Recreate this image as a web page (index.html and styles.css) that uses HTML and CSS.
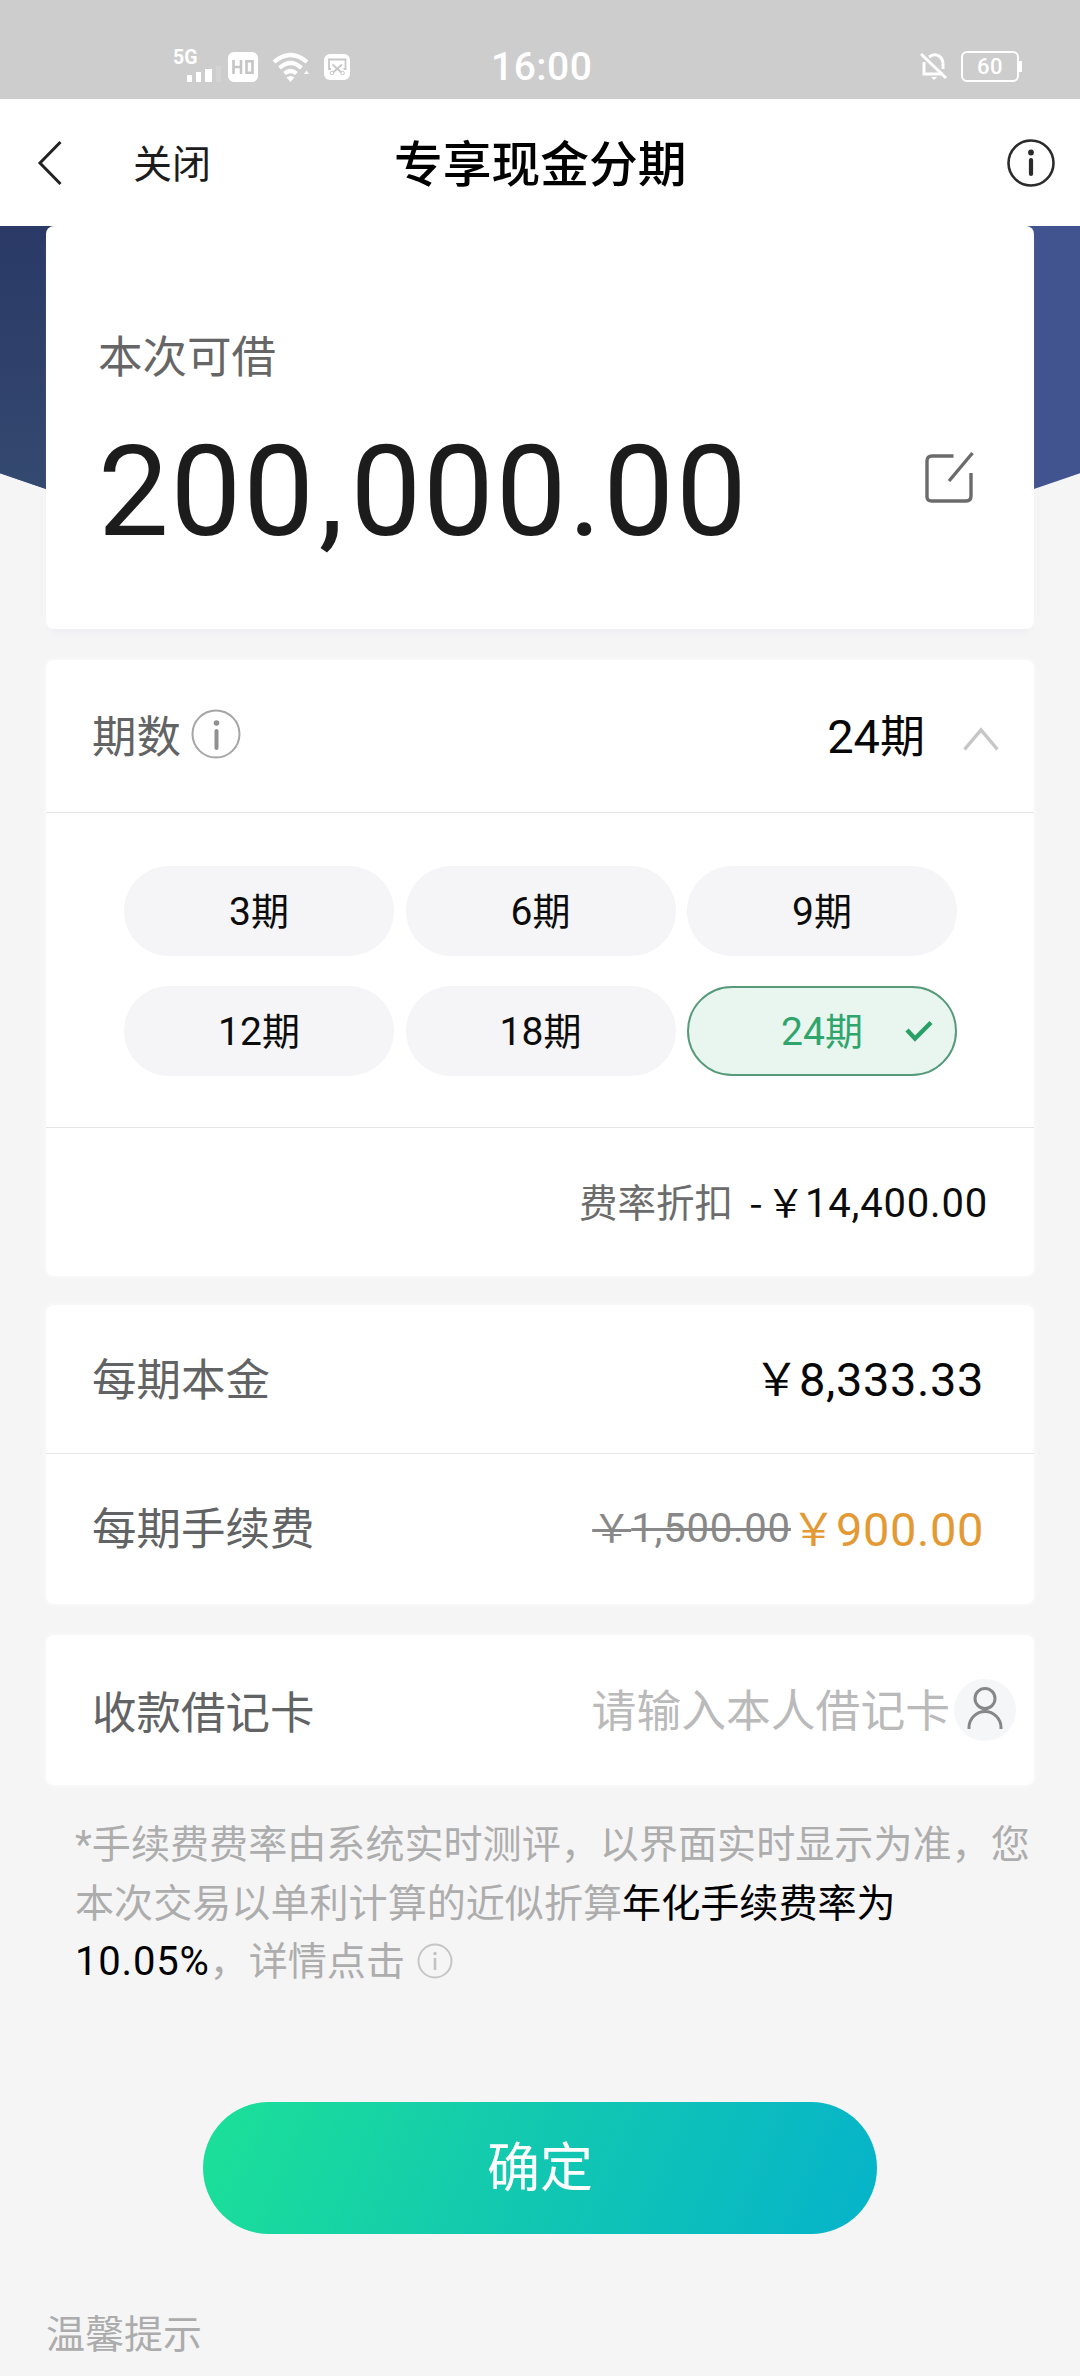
FILE: index.html
```html
<!DOCTYPE html>
<html lang="zh-CN">
<head>
<meta charset="utf-8">
<title>专享现金分期</title>
<link rel="stylesheet" href="styles.css">
</head>
<body>
<div class="statusbar">
  <svg class="status-left" viewBox="0 -10 180 44" width="180" height="44">
    <text class="sim-label" x="0" y="14.500">5G</text>
    <path d="M14 26h5v7h-5zM23 23h5v10h-5zM32 20h7v13h-7z" fill="#fff"/>
    <path d="M43 17h5v16h-5z" fill="#fff" opacity=".12"/>
    <rect x="55" y="3" width="30" height="30" rx="6" fill="#fff"/>
    <path d="M60.500 11v14M68 11v14M60.500 18h7.500M73.500 12.200v11.600h6v-11.600z" fill="none" stroke="#c5c5c5" stroke-width="2.600"/>
    <g fill="none" stroke="#fff" stroke-width="4.200">
      <path d="M101 13Q117.500 -1 134 13"/>
      <path d="M106.500 19Q117.500 9 128.500 19"/>
      <path d="M111.500 24.500Q117.500 19.500 123.500 24.500"/>
    </g>
    <path d="M113.500 28.500q4-3 8 0l-4 4.500z" fill="#fff"/>
    <path d="M131 25l2.500-3.500 2.500 3.500z" fill="#fff"/>
    <rect x="151" y="5" width="26" height="26" rx="6" fill="#fff"/>
    <path d="M158 20h-2V10.500h16.500V20h-2M159.500 15.500l9 8M169 15.500l-9 8" fill="none" stroke="#c8c8c8" stroke-width="1.800"/>
    <circle cx="159" cy="24" r="1.800" fill="none" stroke="#c8c8c8"/>
    <circle cx="169.500" cy="24" r="1.800" fill="none" stroke="#c8c8c8"/>
  </svg>
  <span class="clock">16:00</span>
  <div class="status-right">
    <svg viewBox="0 0 28 30" width="28" height="30">
      <g fill="none" stroke="#fff" stroke-width="3">
        <path d="M4 11v12h19M9 6q5-4 10-1 4 3 4 8v5"/>
        <path d="M1 3l25 24"/>
      </g>
      <path d="M11 26h6l-3 3z" fill="#fff"/>
    </svg>
    <div class="battery"><span>60</span></div>
  </div>
</div>

<header class="navbar">
  <svg class="back" viewBox="0 0 26 48" width="26" height="48"><path d="M23.500 3L3 24l20.500 21" fill="none" stroke="#222" stroke-width="3"/></svg>
  <span class="close">关闭</span>
  <h1 class="title">专享现金分期</h1>
  <svg class="nav-info" viewBox="0 0 50 50" width="50" height="50">
    <circle cx="25" cy="25" r="22.500" fill="none" stroke="#2b2b2b" stroke-width="2.600"/>
    <circle cx="25" cy="14.500" r="2.900" fill="#2b2b2b"/><path d="M25 22v14" stroke="#2b2b2b" stroke-width="4.200" stroke-linecap="round"/>
  </svg>
</header>

<main class="page">
  <section class="card amount-card">
    <div class="amount-label">本次可借</div>
    <div class="amount-row">
      <div class="amount">200<span class="comma">,</span>000.00</div>
      <svg class="edit" viewBox="0 0 52 54" width="52" height="54">
        <path d="M29.500 6H8q-5 0-5 5v36q0 4 5 4h34q5 0 5-5V23" fill="none" stroke="#6b6b6b" stroke-width="3.400"/>
        <path d="M25 31L48.500 3" stroke="#6b6b6b" stroke-width="3.400"/>
      </svg>
    </div>
  </section>

  <section class="card term-card">
    <div class="row term-row">
      <span class="label">期数</span>
      <svg class="term-info" viewBox="0 0 50 50" width="50" height="50">
        <circle cx="25" cy="25" r="23.500" fill="none" stroke="#a6a6a6" stroke-width="2"/>
        <circle cx="25.500" cy="14" r="2.800" fill="#909090"/><path d="M25.500 22v17" stroke="#909090" stroke-width="4" stroke-linecap="round"/>
      </svg>
      <span class="value push"><span class="num">24</span>期</span>
      <svg class="chevron" viewBox="0 0 36 24" width="36" height="24"><path d="M1.500 22.500L18 3l16.500 19.500" fill="none" stroke="#c6c6c6" stroke-width="3.400"/></svg>
    </div>
    <div class="terms">
      <div class="term"><span class="num">3</span>期</div>
      <div class="term"><span class="num">6</span>期</div>
      <div class="term"><span class="num">9</span>期</div>
      <div class="term"><span class="num">12</span>期</div>
      <div class="term"><span class="num">18</span>期</div>
      <div class="term selected"><span class="num">24</span>期<svg class="tick" viewBox="0 0 28 22" width="28" height="22"><path d="M2 10l8 8.500L26 2.500" fill="none" stroke="#2a9f66" stroke-width="4.400"/></svg></div>
    </div>
    <div class="discount">
      <span class="discount-label">费率折扣</span>
      <span class="discount-value"><span class="minus">-</span>&#xFFE5;<span class="num">14,400.00</span></span>
    </div>
  </section>

  <section class="card fee-card">
    <div class="row lined">
      <span class="label">每期本金</span>
      <span class="value push">&#xFFE5;<span class="num">8,333.33</span></span>
    </div>
    <div class="row">
      <span class="label">每期手续费</span>
      <span class="old-fee push">&#xFFE5;<span class="num">1,500.00</span></span>
      <span class="value fee">&#xFFE5;<span class="num">900.00</span></span>
    </div>
  </section>

  <section class="card debit-card">
    <div class="row debit-row">
      <span class="label">收款借记卡</span>
      <span class="placeholder">请输入本人借记卡</span>
      <svg viewBox="0 0 64 64" width="64" height="64">
        <circle cx="32" cy="32" r="31" fill="#f5f6f8"/>
        <g fill="none" stroke="#858789" stroke-width="3">
          <circle cx="32" cy="20.500" r="10"/>
          <path d="M16 51v-1.500a16 16 0 0 1 32 0V51"/>
        </g>
      </svg>
    </div>
  </section>

  <p class="note">*手续费费率由系统实时测评，以界面实时显示为准，您<br>本次交易以单利计算的近似折算<b>年化手续费率为</b><br><b class="num">10.05%</b>，详情点击<svg class="note-info" viewBox="0 0 36 36" width="36" height="36"><circle cx="18" cy="18" r="16.500" fill="none" stroke="#c6c6c6" stroke-width="2"/><circle cx="18" cy="10.500" r="1.700" fill="#c2c2c2"/><path d="M18 15v12" stroke="#c2c2c2" stroke-width="2.600"/></svg></p>

  <button class="confirm">确定</button>
  <div class="tips">温馨提示</div>
</main>
</body>
</html>
```

FILE: styles.css
```css
* { box-sizing: border-box; }
body {
  margin: 0;
  width: 1080px;
  height: 2376px;
  overflow: hidden;
  background: #f5f5f6;
  color: #0c0c0c;
  font-family: Roboto, "Noto Sans CJK SC", sans-serif;
}
svg { display: block; flex: none; }
.push { margin-left: auto; }

/* Status bar */
.statusbar {
  display: grid;
  grid-template-columns: 318px 97px 1fr;
  height: 99px;
  padding: 49px 59px 0 173px;
  background: #cdcdcd;
  color: #fff;
}
.status-left { margin-top: -10px; }
.sim-label { font: 700 19.500px Roboto, sans-serif; fill: #fff; }
.clock { font-size: 39px; font-weight: 500; line-height: 36px; letter-spacing: .5px; white-space: nowrap; }
.status-right { display: flex; justify-content: flex-end; align-items: flex-start; gap: 13px; padding-top: 2px; }
.battery {
  position: relative;
  width: 58px;
  height: 31px;
  margin-right: 2px;
  border: 2.500px solid #fff;
  border-radius: 6px;
  font-size: 22px;
  font-weight: 500;
  line-height: 27px;
  letter-spacing: .5px;
  text-align: center;
}
.battery::after {
  content: "";
  position: absolute;
  right: -5px;
  top: 8px;
  width: 3px;
  height: 11px;
  background: #fff;
}

/* Navigation bar */
.navbar {
  display: flex;
  align-items: center;
  height: 127px;
  padding: 0 24px 0 37px;
  background: #fff;
}
.close { width: 319px; margin: 5px 0 0 70px; font-size: 39px; line-height: 58px; color: #1c1c1c; }
.title { margin: 6px auto 0 -58px; font-size: 48.750px; font-weight: 500; line-height: 70px; color: #000; }

/* Content, with the blue backdrop behind the first card */
.page { padding: 0 46px; }
.page::before {
  content: "";
  position: absolute;
  left: 0;
  top: 226px;
  width: 1080px;
  height: 263px;
  z-index: -1;
  background: linear-gradient(180deg, #2a3966, #344970) 0 0 / 50% 100% no-repeat, #42548f;
  clip-path: polygon(0 0, 100% 0, 100% 94%, 95.740% 100%, 4.260% 100%, 0 94%);
}
.card { background: #fff; border-radius: 8px; box-shadow: 0 0 6px rgba(255, 255, 255, .8); }
.amount-card { height: 403px; padding: 99px 58px 0 52px; box-shadow: 0 9px 6px -5px #efeff2; }
.amount-label { font-size: 44.500px; line-height: 66px; color: #666; }
.amount-row { display: flex; align-items: center; justify-content: space-between; height: 144px; margin-top: 29px; }
.amount { font-size: 126px; line-height: 144px; letter-spacing: 1.800px; color: #1c1c1c; }
.comma { margin: 0 5px 0 3px; }
.edit { margin-bottom: 30px; }

.row { display: flex; align-items: center; height: 149px; padding: 3px 50px 0 46px; }
.label { font-size: 44.500px; line-height: 66px; color: #626364; }
.value { font-size: 45px; line-height: 66px; color: #080808; }
.value .num { font-size: 47px; letter-spacing: .6px; }

.term-card { height: 616px; margin-top: 31px; }
.term-row { height: 153px; padding-right: 35px; border-bottom: 1px solid #e6e6e8; }
.term-row .num { letter-spacing: 0; }
.term-info { margin: -7px 0 0 10px; }
.chevron { margin: 3px 0 0 38px; }
.terms {
  display: grid;
  grid-template-columns: repeat(3, 270px);
  grid-auto-rows: 90px;
  gap: 30px 11.500px;
  height: 315px;
  padding: 53px 0 0 78px;
  border-bottom: 1px solid #e6e6e8;
}
.term {
  position: relative;
  border-radius: 45px;
  background: #f5f5f7;
  font-size: 38px;
  line-height: 92px;
  text-align: center;
}
.term .num { font-size: 39px; }
.term.selected { background: #e8f6ef; border: 2px solid #569a7a; line-height: 88px; color: #2fa56c; }
.tick { position: absolute; right: 22px; top: 32px; }
.discount { display: flex; align-items: baseline; justify-content: flex-end; height: 148px; padding: 43px 46px 0 0; font-size: 38.500px; line-height: 58px; }
.discount-label { color: #6c6c6c; }
.minus { margin: 0 4px 0 16px; font-family: "Noto Sans CJK SC", sans-serif; }
.discount .num, .old-fee .num { font-size: 40px; letter-spacing: .8px; }

.fee-card { height: 299px; margin-top: 29px; }
.lined { border-bottom: 1px solid #e6e6e8; }
.old-fee { margin-top: -3px; font-size: 39px; line-height: 58px; color: #888; text-decoration: line-through; text-decoration-thickness: 3px; }
.fee { color: #e39a35; }
.debit-card { margin-top: 31px; }
.debit-row { height: 150px; padding: 0 17px 0 46px; }
.debit-row .label { margin-top: 7px; }
.placeholder { margin: 3px 3px 0 auto; font-size: 44.800px; line-height: 66px; color: #bababa; }

.note { margin: 31px -20px 0 29px; font-size: 39.100px; line-height: 58.500px; color: #adadad; white-space: nowrap; }
.note b { color: #000; font-weight: 400; }
.note .num { font-size: 40px; letter-spacing: .8px; }
.note-info { display: inline-block; vertical-align: -4px; margin-left: 12px; }

.confirm {
  display: block;
  width: 674px;
  height: 132px;
  margin: 110px auto 0;
  padding: 0 0 7px;
  border: 0;
  border-radius: 66px;
  background: linear-gradient(112deg, #1bde9a 5%, #12c7b1 50%, #07b5c8 95%);
  color: #fff;
  font: 53px Roboto, "Noto Sans CJK SC", sans-serif;
}
.tips { margin-top: 72px; font-size: 39px; line-height: 58px; color: #acacac; }
```
